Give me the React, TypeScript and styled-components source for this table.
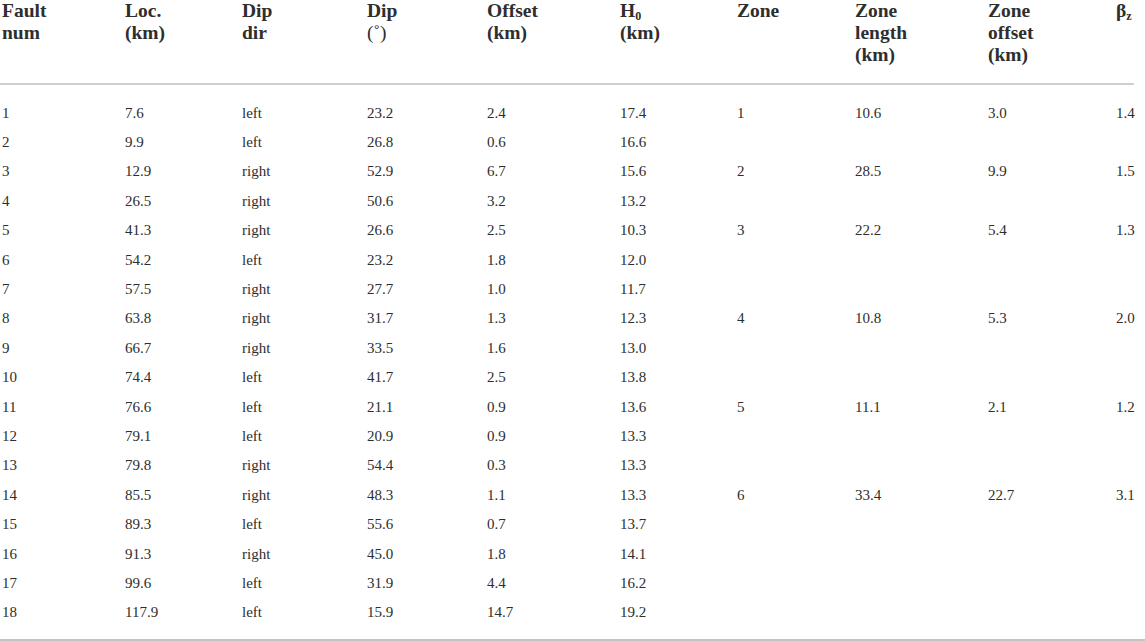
import React from "react";
import styled, { createGlobalStyle } from "styled-components";

const Global = createGlobalStyle`
  html, body { margin: 0; padding: 0; background: #fff; }
  body { font-family: "Liberation Serif", "Times New Roman", serif; color: #2e2e2e; }
`;

const Frame = styled.div`
  width: 1145px;
  border-bottom: 2px solid #c4c4c4;
`;

const Table = styled.table`
  width: 1134px;
  border-collapse: collapse;
  table-layout: fixed;
`;

const HeadCell = styled.th`
  text-align: left;
  vertical-align: top;
  font-weight: 700;
  font-size: 19.5px;
  line-height: 22px;
  color: #2e2e2e;
  padding: 0 0 17px 2px;
  border-bottom: 2px solid #cfcfcf;
`;

const Light = styled.span`
  font-weight: 400;
`;

const Sub = styled.sub`
  font-size: 0.62em;
  vertical-align: -0.25em;
  line-height: 0;
`;

const Cell = styled.td<{ $first?: boolean; $last?: boolean }>`
  font-size: 15px;
  line-height: 29.4px;
  color: #2e2e2e;
  padding: ${(p) => (p.$first ? "13.5px" : "0")} 0 ${(p) => (p.$last ? "11px" : "0")} 2px;
  vertical-align: top;
  white-space: nowrap;
`;

const widths = [123, 117, 125, 120, 133, 117, 118, 133, 128, 20];

const faults: [string, string, string, string, string, string][] = [
  ["1", "7.6", "left", "23.2", "2.4", "17.4"],
  ["2", "9.9", "left", "26.8", "0.6", "16.6"],
  ["3", "12.9", "right", "52.9", "6.7", "15.6"],
  ["4", "26.5", "right", "50.6", "3.2", "13.2"],
  ["5", "41.3", "right", "26.6", "2.5", "10.3"],
  ["6", "54.2", "left", "23.2", "1.8", "12.0"],
  ["7", "57.5", "right", "27.7", "1.0", "11.7"],
  ["8", "63.8", "right", "31.7", "1.3", "12.3"],
  ["9", "66.7", "right", "33.5", "1.6", "13.0"],
  ["10", "74.4", "left", "41.7", "2.5", "13.8"],
  ["11", "76.6", "left", "21.1", "0.9", "13.6"],
  ["12", "79.1", "left", "20.9", "0.9", "13.3"],
  ["13", "79.8", "right", "54.4", "0.3", "13.3"],
  ["14", "85.5", "right", "48.3", "1.1", "13.3"],
  ["15", "89.3", "left", "55.6", "0.7", "13.7"],
  ["16", "91.3", "right", "45.0", "1.8", "14.1"],
  ["17", "99.6", "left", "31.9", "4.4", "16.2"],
  ["18", "117.9", "left", "15.9", "14.7", "19.2"],
];

const zones: Record<number, [string, string, string, string]> = {
  0: ["1", "10.6", "3.0", "1.4"],
  2: ["2", "28.5", "9.9", "1.5"],
  4: ["3", "22.2", "5.4", "1.3"],
  7: ["4", "10.8", "5.3", "2.0"],
  10: ["5", "11.1", "2.1", "1.2"],
  13: ["6", "33.4", "22.7", "3.1"],
};

export default function App() {
  return (
    <>
      <Global />
      <Frame>
        <Table>
          <colgroup>
            {widths.map((w, i) => (
              <col key={i} style={{ width: w }} />
            ))}
          </colgroup>
          <thead>
            <tr>
              <HeadCell>Fault<br />num</HeadCell>
              <HeadCell>Loc.<br />(km)</HeadCell>
              <HeadCell>Dip<br />dir</HeadCell>
              <HeadCell>Dip<br /><Light>(˚)</Light></HeadCell>
              <HeadCell>Offset<br />(km)</HeadCell>
              <HeadCell>H<Sub>0</Sub><br />(km)</HeadCell>
              <HeadCell>Zone</HeadCell>
              <HeadCell>Zone<br />length<br />(km)</HeadCell>
              <HeadCell>Zone<br />offset<br />(km)</HeadCell>
              <HeadCell>β<Sub>z</Sub></HeadCell>
            </tr>
          </thead>
          <tbody>
            {faults.map((f, i) => {
              const z = zones[i] ?? ["", "", "", ""];
              const first = i === 0;
              const last = i === faults.length - 1;
              return (
                <tr key={i}>
                  {[...f, ...z].map((v, j) => (
                    <Cell key={j} $first={first} $last={last}>
                      {v}
                    </Cell>
                  ))}
                </tr>
              );
            })}
          </tbody>
        </Table>
      </Frame>
    </>
  );
}
